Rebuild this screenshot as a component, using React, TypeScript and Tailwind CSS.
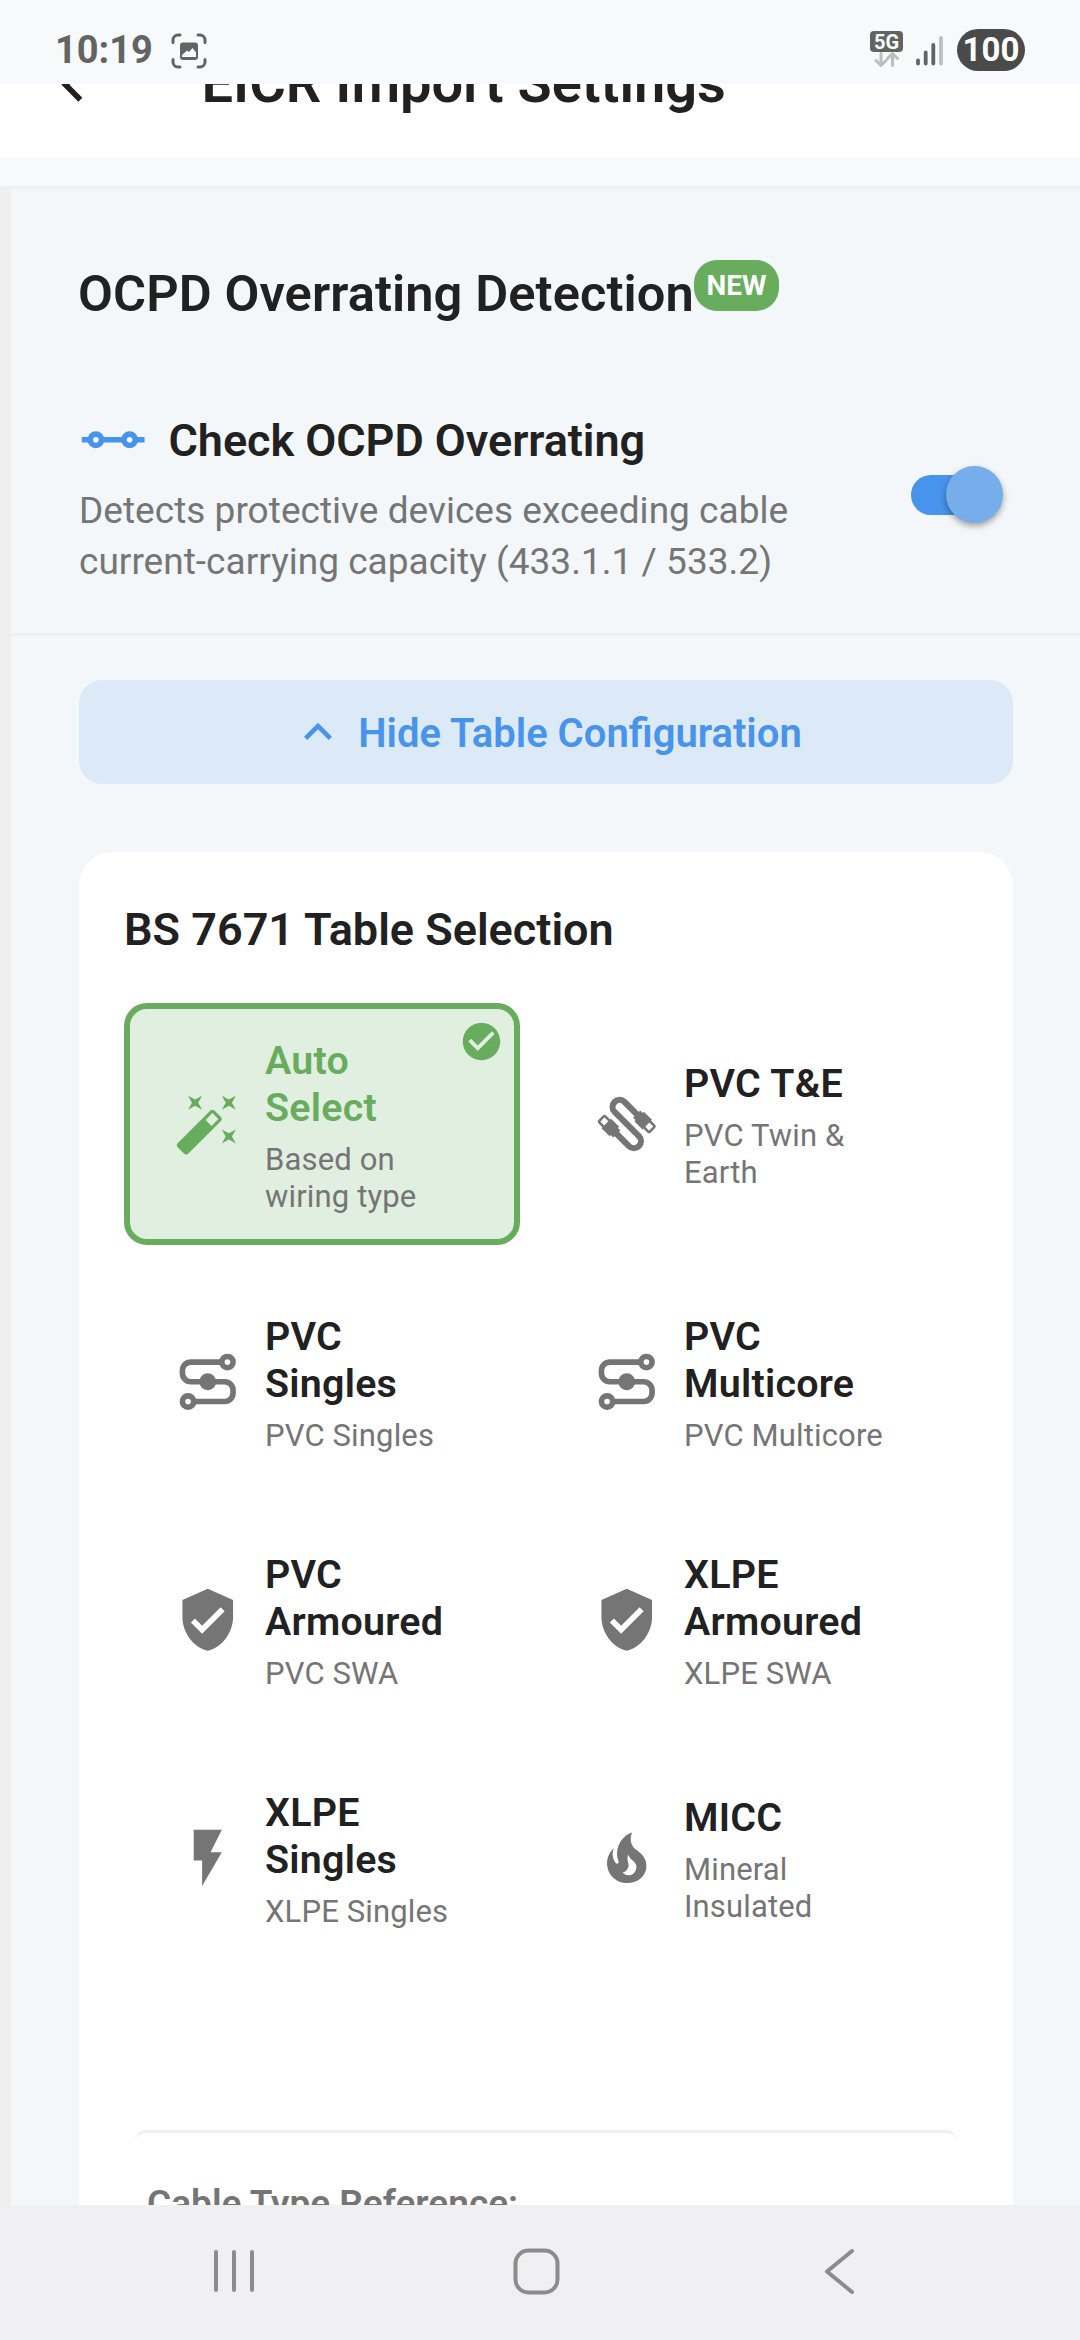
import React from 'react';
import clsx from 'clsx';

const paths = {
  wand: 'M7.5,5.6L5,7L6.4,4.5L5,2L7.5,3.4L10,2L8.6,4.5L10,7L7.5,5.6M19.5,15.4L22,14L20.6,16.5L22,19L19.5,17.6L17,19L18.4,16.5L17,14L19.5,15.4M22,2L20.6,4.5L22,7L19.5,5.6L17,7L18.4,4.5L17,2L19.5,3.4L22,2M13.34,12.78L15.78,10.34L13.66,8.22L11.22,10.66L13.34,12.78M14.37,7.29L16.71,9.63C17.1,10 17.1,10.65 16.71,11.04L5.04,22.71C4.65,23.1 4,23.1 3.63,22.71L1.29,20.37C0.9,20 0.9,19.35 1.29,18.96L12.96,7.29C13.35,6.9 14,6.9 14.37,7.29Z',
  shield: 'M10,17L6,13L7.41,11.59L10,14.17L16.59,7.58L18,9M12,1L3,5V11C3,16.55 6.84,21.74 12,23C17.16,21.74 21,16.55 21,11V5L12,1Z',
  flash: 'M7,2V13H10V22L17,10H13L17,2H7Z',
  fire: 'M17.66 11.2C17.43 10.9 17.15 10.64 16.89 10.38C16.22 9.78 15.46 9.35 14.82 8.72C13.33 7.26 13 4.85 13.95 3C13 3.23 12.17 3.75 11.46 4.32C8.87 6.4 7.85 10.07 9.07 13.22C9.11 13.32 9.15 13.42 9.15 13.55C9.15 13.77 9 13.97 8.8 14.05C8.57 14.15 8.33 14.09 8.14 13.93C8.08 13.88 8.04 13.83 8 13.76C6.87 12.33 6.69 10.28 7.45 8.64C5.78 10 4.87 12.3 5 14.47C5.06 14.97 5.12 15.47 5.29 15.97C5.43 16.57 5.7 17.17 6 17.7C7.08 19.43 8.95 20.67 10.96 20.92C13.1 21.19 15.39 20.8 17.03 19.32C18.86 17.66 19.5 15 18.56 12.72L18.43 12.46C18.22 12 17.66 11.2 17.66 11.2M14.5 17.5C14.22 17.74 13.76 18 13.4 18.1C12.28 18.5 11.16 17.94 10.5 17.28C11.69 17 12.4 16.12 12.61 15.23C12.78 14.43 12.46 13.77 12.33 13C12.21 12.26 12.23 11.63 12.5 10.94C12.69 11.32 12.89 11.7 13.13 12C13.9 13 15.11 13.44 15.37 14.8C15.41 14.94 15.43 15.08 15.43 15.23C15.46 16.05 15.1 16.95 14.5 17.5H14.5Z',
  checkCircle: 'M12 2C6.5 2 2 6.5 2 12S6.5 22 12 22 22 17.5 22 12 17.5 2 12 2M10 17L5 12L6.41 10.59L10 14.17L17.59 6.58L19 8L10 17Z',
  chevronUp: 'M7.41,15.41L12,10.83L16.59,15.41L18,14L12,8L6,14L7.41,15.41Z',
  chevronLeft: 'M15.41,16.58L10.83,12L15.41,7.41L14,6L8,12L14,18L15.41,16.58Z',
};

const Glyph = ({ d, className }: { d: string; className?: string }) => (
  <svg viewBox="0 0 24 24" fill="currentColor" className={clsx('shrink-0', className)}>
    <path d={d} />
  </svg>
);

const ConnectionIcon = ({ className }: { className?: string }) => (
  <svg viewBox="0 0 24 24" fill="none" stroke="currentColor" strokeWidth="2" className={className}>
    <path d="M1 12h3M8 12h8M20 12h3.3" />
    <circle cx="6" cy="12" r="2" />
    <circle cx="18" cy="12" r="2" />
  </svg>
);

const RouteIcon = ({ className }: { className?: string }) => (
  <svg viewBox="0 0 24 24" fill="none" stroke="currentColor" strokeWidth="2" className={className}>
    <path d="M17 5H6a3 3 0 0 0-3 3v1a3 3 0 0 0 3 3h12a3 3 0 0 1 3 3v1a3 3 0 0 1-3 3H7" />
    <circle cx="19" cy="5" r="2" />
    <circle cx="5" cy="19" r="2" />
    <circle cx="12" cy="12" r="3" fill="currentColor" stroke="none" />
  </svg>
);

const CablePlug = () => (
  <g>
    <rect x="-7.4" y="-5.3" width="4.8" height="4.1" fill="currentColor" />
    <rect x="-6.8" y="-1.6" width="3.6" height="1.6" fill="currentColor" />
    <rect x="-6.5" y="-7.7" width="3" height="3" rx="0.4" fill="none" stroke="currentColor" strokeWidth="0.9" />
  </g>
);

const CableIcon = ({ className }: { className?: string }) => (
  <svg viewBox="0 0 24 24" className={className}>
    <g transform="translate(12 12.1) rotate(-45)">
      <path d="M-5 -1V6.1A2.5 2.5 0 0 0 0 6.1V-6.1A2.5 2.5 0 0 1 5 -6.1V1" fill="none" stroke="currentColor" strokeWidth="2.2" />
      <CablePlug />
      <g transform="rotate(180)">
        <CablePlug />
      </g>
    </g>
  </svg>
);

const iconSize = 'w-[67.5px] h-[67.5px] shrink-0';

const options = [
  { title: 'Auto\nSelect', sub: 'Based on\nwiring type', icon: <Glyph d={paths.wand} className={iconSize} />, selected: true },
  { title: 'PVC T&E', sub: 'PVC Twin &\nEarth', icon: <CableIcon className={iconSize} /> },
  { title: 'PVC\nSingles', sub: 'PVC Singles', icon: <RouteIcon className={iconSize} /> },
  { title: 'PVC\nMulticore', sub: 'PVC Multicore', icon: <RouteIcon className={iconSize} /> },
  { title: 'PVC\nArmoured', sub: 'PVC SWA', icon: <Glyph d={paths.shield} className={iconSize} /> },
  { title: 'XLPE\nArmoured', sub: 'XLPE SWA', icon: <Glyph d={paths.shield} className={iconSize} /> },
  { title: 'XLPE\nSingles', sub: 'XLPE Singles', icon: <Glyph d={paths.flash} className={iconSize} /> },
  { title: 'MICC', sub: 'Mineral\nInsulated', icon: <Glyph d={paths.fire} className={iconSize} /> },
];

const StatusBar = () => (
  <div className="h-[84px] shrink-0 bg-[#f8f9fb] flex items-start justify-between pl-[55px] pr-[55px]">
    <div className="flex items-start">
      <span className="mt-[26px] w-[98px] text-[38px] leading-[48px] font-bold text-[#626462] whitespace-nowrap">10:19</span>
      <svg viewBox="0 0 36 36" className="w-9 h-9 mt-[33px] ml-[18px]" fill="none" stroke="#626462" strokeWidth="3" strokeLinecap="round">
        <path d="M2 9.5V7a5 5 0 0 1 5-5h2M27 2h2a5 5 0 0 1 5 5v2.5M34 26.5v2.5a5 5 0 0 1-5 5h-2M9 34H7a5 5 0 0 1-5-5v-2.5" />
        <path fillRule="evenodd" stroke="none" fill="#626462" d="M12 9.5h12a3 3 0 0 1 3 3v11.500a3 3 0 0 1-3 3H12a3 3 0 0 1-3-3V12.500a3 3 0 0 1 3-3zM11 24h14v-4.500l-3.500-4.500-3.500 4-2-1.500-5 4.500z" />
      </svg>
    </div>
    <div className="flex items-start">
      <div className="w-[33px] mt-[31px] flex flex-col items-center">
        <span className="w-full h-[21px] rounded-[4px] bg-[#626462] text-white text-[20px] leading-[22px] font-bold text-center">5G</span>
        <svg viewBox="0 0 26 15" className="w-[26px] h-[15px]" fill="none" stroke="#bdbebe" strokeWidth="3" strokeLinecap="round" strokeLinejoin="round">
          <path d="M7 1.5V13M2 8.5l5 5 5-5M18.5 13.5V2M13.5 6.5l5-5 5 5" />
        </svg>
      </div>
      <svg viewBox="0 0 28 30" className="w-7 h-[30px] mt-[36px] ml-[13px]" strokeWidth="3.8" strokeLinecap="round" stroke="#626462">
        <path d="M2 24.5v3M9.7 16.5v11M17.3 9v18.5" />
        <path d="M25 2v25.5" stroke="#bdbebe" />
      </svg>
      <span className="w-[68px] h-[42px] mt-[29px] ml-[13px] rounded-full bg-[#4a4a4a] text-white text-[33px] leading-[42px] font-bold text-center">100</span>
    </div>
  </div>
);

const NavBar = () => (
  <div className="h-[135px] shrink-0 bg-[#f0f0f3] flex items-start pt-[43px] text-[#8c8c8c]">
    <svg viewBox="0 0 46 48" className="w-[46px] h-12 ml-[211px]" stroke="currentColor" strokeWidth="4" strokeLinecap="round">
      <path d="M5 4v38M23 4v38M41 4v38" />
    </svg>
    <svg viewBox="0 0 48 48" className="w-12 h-12 ml-[255px]" fill="none" stroke="currentColor" strokeWidth="4">
      <rect x="3.5" y="2.5" width="42" height="42" rx="13" />
    </svg>
    <svg viewBox="0 0 36 48" className="w-9 h-12 ml-[262px]" fill="none" stroke="currentColor" strokeWidth="4" strokeLinecap="round" strokeLinejoin="round">
      <path d="M30 3L5 23.5L30 44" />
    </svg>
  </div>
);

const OptionTile = ({ title, sub, icon, selected }: { title: string; sub: string; icon: React.ReactNode; selected?: boolean }) => (
  <div
    className={clsx(
      'relative flex items-center gap-[23.5px] pl-[44px] rounded-[23px] border-[6px]',
      selected ? 'border-[#68ad5d] bg-[#e1efe1] text-[#68ad5d]' : 'border-transparent text-[#757575]'
    )}
  >
    {icon}
    <div className="pt-[3.5px] whitespace-pre-line">
      <p className={clsx('text-[39.4px] leading-[47px] font-semibold tracking-[0.25px]', selected ? 'text-[#68ad5d]' : 'text-[#212121]')}>{title}</p>
      <p className="mt-[10px] text-[31px] leading-[37px] tracking-[0.15px] text-[#757575]">{sub}</p>
    </div>
    {selected && <Glyph d={paths.checkCircle} className="absolute top-[10px] right-[10px] w-[45px] h-[45px]" />}
  </div>
);

const App: React.FC = () => {
  return (
    <div className="w-[1080px] h-[2340px] flex flex-col overflow-hidden bg-[#f8f9fb] font-['Roboto',sans-serif] text-[#212121]">
      <StatusBar />
      <header className="h-[74px] shrink-0 bg-white overflow-hidden flex items-start">
        <Glyph d={paths.chevronLeft} className="w-[67.5px] h-[67.5px] ml-[39px] -mt-[33px]" />
        <h1 className="ml-[95px] -mt-[32px] text-[56px] leading-[62px] font-semibold whitespace-nowrap">EICR Import Settings</h1>
      </header>

      <main className="mt-[28px] flex-1 min-h-0 overflow-hidden border-t-[3px] border-l-[11px] border-[#efefef] bg-[#f3f7fa]">
        <section className="pt-[71px] pl-[67px] pb-[46px] border-b-[3px] border-[#efefef]">
          <div className="flex items-start h-[64px]">
            <h2 className="mt-[4px] text-[50.6px] leading-[60px] font-semibold tracking-[0.1px] whitespace-nowrap">OCPD Overrating Detection</h2>
            <span className="w-[85px] h-[51px] rounded-[23px] bg-[#68ad5d] text-white text-[28px] leading-[52px] font-bold text-center">NEW</span>
          </div>

          <div className="mt-[91px] flex items-start justify-between pr-[82px]">
            <div>
              <div className="flex items-center h-[52px]">
                <ConnectionIcon className="w-[67.5px] h-[67.5px] ml-[1px] -mt-[2px] text-[#4893ec]" />
                <h3 className="ml-[22px] text-[45px] leading-[52px] font-semibold tracking-[-0.06px] whitespace-nowrap">Check OCPD Overrating</h3>
              </div>
              <p className="mt-[18px] ml-px text-[37px] leading-[51px] tracking-[0.03px] text-[#757575] whitespace-nowrap">
                Detects protective devices exceeding cable
                <br />
                current-carrying capacity (433.1.1 / 533.2)
              </p>
            </div>
            <div className="mt-[60px] w-[87px] h-10 rounded-full bg-[#4893ec] relative">
              <span className="absolute -top-[9px] left-[35px] w-[57px] h-[57px] rounded-full bg-[#76aeec] shadow-[0_3px_6px_rgba(0,0,0,0.35)]" />
            </div>
          </div>
        </section>

        <section className="pt-[44px] pl-[68px] pr-[67px]">
          <button className="w-full h-[104px] rounded-[23px] bg-[#dceaf8] text-[#4893ec] flex items-center justify-center">
            <Glyph d={paths.chevronUp} className="w-[56px] h-[56px]" />
            <span className="ml-[12px] mt-[4px] text-[40px] font-semibold">Hide Table Configuration</span>
          </button>

          <div className="mt-[68px] h-[1500px] rounded-[34px] bg-white pt-[52px] px-[45px]">
            <h3 className="text-[45px] leading-[52px] font-semibold">BS 7671 Table Selection</h3>
            <div className="mt-[47px] grid grid-cols-[396px_396px] grid-rows-[242px_202.5px_202.5px_202.5px] gap-x-[23px] gap-y-[35.5px]">
              {options.map((o) => (
                <OptionTile key={o.title} {...o} />
              ))}
            </div>
            <div className="mt-[170.5px] mx-[11px] pt-[47px] pl-[12px] rounded-[11px] border-t-[3px] border-[#efefef]">
              <p className="text-[37px] leading-[48px] font-semibold text-[#757575]">Cable Type Reference:</p>
            </div>
          </div>
        </section>
      </main>
      <NavBar />
    </div>
  );
};

export default App;
